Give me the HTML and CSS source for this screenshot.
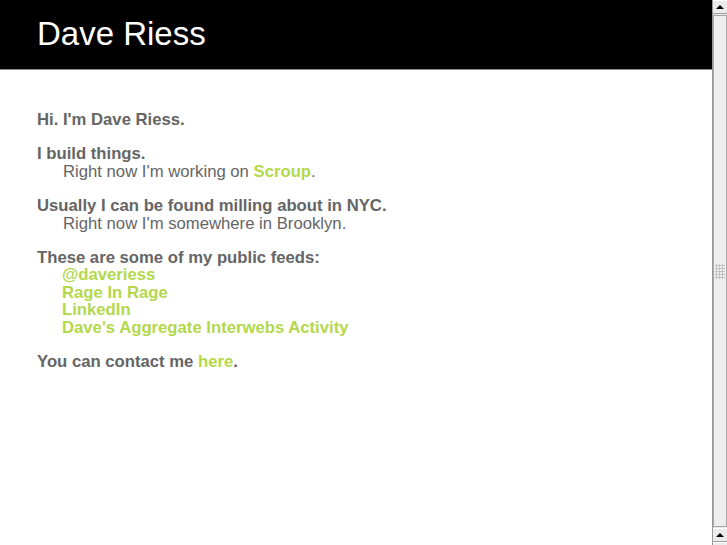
FILE: index.html
```html
<!DOCTYPE html>
<html>
<head>
<meta charset="utf-8">
<title>Dave Riess</title>
<link rel="stylesheet" href="styles.css">
</head>
<body>
<div class="page">
  <header class="masthead"><h1 class="title">Dave Riess</h1></header>
  <main class="content">
    <p class="lead">Hi. I'm Dave Riess.</p>
    <p class="lead">I build things.<span class="sub">Right now I'm working on <a href="#">Scroup</a>.</span></p>
    <p class="lead">Usually I can be found milling about in NYC.<span class="sub">Right now I'm somewhere in Brooklyn.</span></p>
    <div class="lead feeds">These are some of my public feeds:
      <ul class="feed-list">
        <li><a href="#">@daveriess</a></li>
        <li><a href="#">Rage In Rage</a></li>
        <li><a href="#">LinkedIn</a></li>
        <li><a href="#">Dave's Aggregate Interwebs Activity</a></li>
      </ul>
    </div>
    <p class="lead">You can contact me <a href="#">here</a>.</p>
  </main>
</div>
<div class="scrollbar">
  <div class="sb-btn"><span class="arrow"></span></div>
  <div class="sb-thumb"><span class="grip"></span></div>
  <div class="sb-btn"><span class="arrow"></span></div>
  <div class="sb-btn sb-cut"></div>
</div>
</body>
</html>
```
FILE: styles.css
```css
html, body {
  margin: 0;
  padding: 0;
  background: #fff;
}
body {
  font-family: "Liberation Sans", Arial, Helvetica, sans-serif;
  color: #656565;
  overflow: hidden;
  height: 545px;
}
.page {
  margin-right: 15px;
}
.masthead {
  background: #000;
  height: 69px;
  border-bottom: 1px solid #8a8a8a;
  padding-left: 37px;
  display: flex;
  align-items: center;
}
.title {
  margin: 0;
  color: #fff;
  font-weight: normal;
  font-size: 33px;
  line-height: 1;
  padding-bottom: 3px;
}
.content {
  padding: 41px 0 0 37px;
}
.lead {
  margin: 0 0 17px;
  font-size: 16.7px;
  font-weight: bold;
  line-height: 17.4px;
}
.sub {
  display: block;
  font-weight: normal;
  padding-left: 26px;
}
a {
  color: #b4d84c;
  font-weight: bold;
  text-decoration: none;
}
.feed-list {
  list-style: none;
  margin: 0;
  padding: 0 0 0 25px;
}
.scrollbar {
  position: fixed;
  top: 0;
  right: 0;
  width: 15px;
  height: 545px;
  background: #e9e9e9;
  border-left: 1px solid #999;
  box-sizing: border-box;
  display: flex;
  flex-direction: column;
}
.sb-btn {
  height: 14px;
  flex: none;
  display: flex;
  align-items: center;
  justify-content: center;
  border-bottom: 1px solid #a0a0a0;
  border-top: 1px solid #fff;
  background: #ececec;
  box-sizing: border-box;
}
.sb-cut {
  height: 3px;
  border-bottom: none;
}
.arrow {
  width: 0;
  height: 0;
  border-left: 4px solid transparent;
  border-right: 4px solid transparent;
  border-bottom: 4px solid #000;
}
.sb-thumb {
  flex: 1;
  margin: 1px 0;
  background: #eeeeee;
  border: 1px solid #a8a8a8;
  box-sizing: border-box;
  display: flex;
  align-items: center;
  justify-content: center;
}
.grip {
  width: 10px;
  height: 15px;
  background-image: radial-gradient(circle, #c4c4c4 1px, transparent 1.2px);
  background-size: 3px 3px;
}
```
